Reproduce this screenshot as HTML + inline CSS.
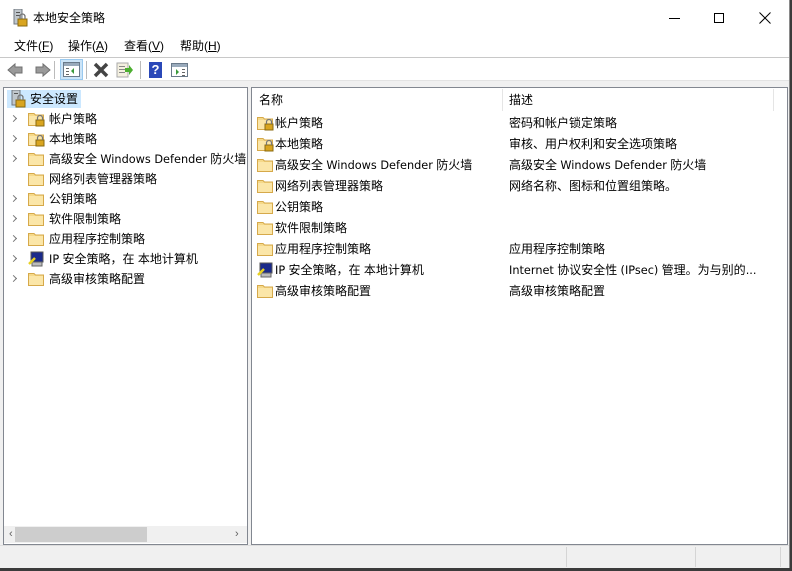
<!DOCTYPE html>
<html><head><meta charset="utf-8"><style>
*{margin:0;padding:0;box-sizing:border-box}
body{width:792px;height:571px;background:#3b3b3b;position:relative;overflow:hidden;font-family:"Liberation Sans","Noto Sans CJK SC",sans-serif;font-size:12px;color:#000}
.a{position:absolute}
#win{left:0;top:0;width:790px;height:568px;background:#fff;border:1px solid #8a8a8a;border-top:none;border-left:none}
.t{position:absolute;white-space:nowrap;line-height:16px}
.l{font-family:"DejaVu Sans","Noto Sans CJK SC",sans-serif;font-size:11.3px}
.chev{position:absolute;width:5px;height:5px;border-right:1.2px solid #777;border-bottom:1.2px solid #777;transform:rotate(-45deg)}
</style></head><body>
<div id="win" class="a">
<svg class="a" style="left:12px;top:9px" width="16" height="18"><rect x="2" y="0" width="8" height="15" fill="#bfc6cc" stroke="#707880"/><rect x="4" y="3" width="4" height="1" fill="#555"/><rect x="4" y="6" width="4" height="1" fill="#555"/><rect x="6" y="10" width="9" height="7" fill="#d9a520" stroke="#8a6a10"/><path d="M8 10V7.5a2.5 2.5 0 0 1 5 0V10" fill="none" stroke="#777" stroke-width="1.3"/></svg>
<div class="t" style="left:33px;top:10px;font-size:12px">本地安全策略</div>
<div class="a" style="left:669px;top:18px;width:11px;height:1px;background:#000"></div>
<div class="a" style="left:714px;top:13px;width:10px;height:10px;border:1px solid #000"></div>
<svg class="a" style="left:759px;top:12px" width="12" height="12"><path d="M0.5 0.5L11.5 11.5M11.5 0.5L0.5 11.5" stroke="#000" stroke-width="1"/></svg>
<div class="t" style="left:14px;top:38px">文件(<u>F</u>)</div>
<div class="t" style="left:68px;top:38px">操作(<u>A</u>)</div>
<div class="t" style="left:124px;top:38px">查看(<u>V</u>)</div>
<div class="t" style="left:180px;top:38px">帮助(<u>H</u>)</div>
<div class="a" style="left:0;top:57px;width:789px;height:1px;background:#c8c8c8"></div>
<svg class="a" style="left:7px;top:62px" width="44" height="16"><path d="M1 8L8 2V5H15V11H8V14Z" fill="#9a9a9a" stroke="#707070"/><path d="M43 8L36 2V5H29V11H36V14Z" fill="#9a9a9a" stroke="#707070"/></svg>
<div class="a" style="left:54px;top:61px;width:1px;height:18px;background:#bbb"></div>
<div class="a" style="left:60px;top:59px;width:23px;height:21px;background:#cce4f7;border:1px solid #99c9ef"></div>
<svg class="a" style="left:63px;top:62px" width="18" height="16"><rect x="0.5" y="0.5" width="16" height="14" fill="#fff" stroke="#6a7a8a"/><rect x="1" y="1" width="15" height="3" fill="#9ab"/><path d="M11 6L8 9L11 12Z" fill="#3a9a3a"/><rect x="3" y="6" width="3" height="1" fill="#666"/><rect x="3" y="9" width="3" height="1" fill="#666"/><rect x="3" y="12" width="3" height="1" fill="#666"/></svg>
<div class="a" style="left:86px;top:61px;width:1px;height:18px;background:#bbb"></div>
<svg class="a" style="left:93px;top:62px" width="16" height="16"><path d="M2 2L14 14M14 2L2 14" stroke="#444" stroke-width="3.5"/></svg>
<svg class="a" style="left:116px;top:62px" width="18" height="16"><rect x="1" y="1" width="11" height="14" fill="#f4f0e0" stroke="#aaa"/><rect x="3" y="4" width="6" height="1" fill="#888"/><rect x="3" y="7" width="6" height="1" fill="#888"/><rect x="3" y="10" width="6" height="1" fill="#888"/><path d="M9 6H13V3L17 8L13 13V10H9Z" fill="#4caf30"/></svg>
<div class="a" style="left:140px;top:61px;width:1px;height:18px;background:#bbb"></div>
<div class="a" style="left:149px;top:62px;width:13px;height:16px;background:#2a48b8;color:#fff;font-weight:bold;font-size:13px;text-align:center;line-height:16px">?</div>
<svg class="a" style="left:171px;top:63px" width="18" height="15"><rect x="0.5" y="0.5" width="16" height="13" fill="#fff" stroke="#6a7a8a"/><rect x="1" y="1" width="15" height="3" fill="#9ab"/><path d="M5 6L8 9L5 12Z" fill="#3a9a3a"/><rect x="11" y="6" width="3" height="1" fill="#666"/><rect x="11" y="9" width="3" height="1" fill="#666"/><rect x="11" y="12" width="3" height="1" fill="#666"/></svg>
<div class="a" style="left:0;top:80px;width:789px;height:7px;background:#f0f0f0;border-top:1px solid #e3e3e3"></div>
<div class="a" style="left:0;top:87px;width:789px;height:458px;background:#f0f0f0"></div>
<div class="a" style="left:3px;top:87px;width:245px;height:458px;background:#fff;border:1px solid #828790"></div>
<div class="a" style="left:7px;top:90px;width:74px;height:18px;background:#cce8ff"></div>
<svg class="a" style="left:10px;top:90px" width="16" height="18"><rect x="2" y="0" width="8" height="15" fill="#bfc6cc" stroke="#707880"/><rect x="4" y="3" width="4" height="1" fill="#555"/><rect x="6" y="10" width="9" height="7" fill="#d9a520" stroke="#8a6a10"/><path d="M8 10V7.5a2.5 2.5 0 0 1 5 0V10" fill="none" stroke="#777" stroke-width="1.3"/></svg>
<div class="t" style="left:30px;top:91px">安全设置</div>
<div class="a" style="left:251px;top:87px;width:537px;height:458px;background:#fff;border:1px solid #828790"></div>
<div class="t" style="left:259px;top:92px">名称</div>
<div class="a" style="left:502px;top:89px;width:1px;height:22px;background:#e5e5e5"></div>
<div class="t" style="left:509px;top:92px">描述</div>
<div class="a" style="left:773px;top:89px;width:1px;height:22px;background:#e5e5e5"></div>
<div class="a" style="left:4px;top:526px;width:243px;height:17px;background:#f0f0f0"></div>
<div class="a" style="left:15px;top:527px;width:132px;height:15px;background:#cdcdcd"></div>
<div class="t" style="left:9px;top:526px;color:#606060;font-size:11px">‹</div>
<div class="t" style="left:235px;top:526px;color:#606060;font-size:11px">›</div>
<div class="a" style="left:0;top:545px;width:789px;height:23px;background:#f0f0f0;border-top:1px solid #ddd"></div>
<div class="a" style="left:566px;top:547px;width:1px;height:20px;background:#d5d5d5"></div>
<div class="a" style="left:695px;top:547px;width:1px;height:20px;background:#d5d5d5"></div>
<div class="a" style="left:780px;top:547px;width:1px;height:20px;background:#d5d5d5"></div>
</div>
<div id="rows"></div>
<script>
function folder(x,y,lock){return '<svg class="a" style="left:'+x+'px;top:'+y+'px" width="17" height="16"><path d="M0.5 2.5H6L7.5 4H15.5V14.5H0.5Z" fill="#f5d98a" stroke="#d6a94a"/><rect x="1" y="5" width="14" height="9" fill="#fbe6a8"/>'+(lock?'<rect x="8" y="9" width="8" height="6" fill="#d9a520" stroke="#8a6a10"/><path d="M9.5 9V7a2.5 2.5 0 0 1 5 0V9" fill="none" stroke="#777" stroke-width="1.2"/>':'')+'</svg>';}
function ip(x,y){return '<svg class="a" style="left:'+x+'px;top:'+y+'px" width="17" height="16"><rect x="3" y="1" width="12" height="10" fill="#1a2a8a" stroke="#555"/><rect x="4" y="11" width="10" height="4" fill="#bbb" stroke="#666"/><path d="M1 13L7 7" stroke="#e8d020" stroke-width="2.5"/></svg>';}
function lat(s){return s.replace(/([A-Za-z()\.][A-Za-z()\. ]*[A-Za-z()\.]|[A-Za-z])/g,'<span class="l">$1</span>');}
var L=[["帐户策略",1,1],["本地策略",1,1],["高级安全 Windows Defender 防火墙",1,0],["网络列表管理器策略",0,0],["公钥策略",1,0],["软件限制策略",1,0],["应用程序控制策略",1,0],["IP 安全策略，在 本地计算机",1,2],["高级审核策略配置",1,0]];
var R=[["帐户策略","密码和帐户锁定策略",1],["本地策略","审核、用户权利和安全选项策略",1],["高级安全 Windows Defender 防火墙","高级安全 Windows Defender 防火墙",0],["网络列表管理器策略","网络名称、图标和位置组策略。",0],["公钥策略","",0],["软件限制策略","",0],["应用程序控制策略","应用程序控制策略",0],["IP 安全策略，在 本地计算机","Internet 协议安全性 (IPsec) 管理。为与别的...",2],["高级审核策略配置","高级审核策略配置",0]];
var h='';
L.forEach(function(r,i){var y=110+i*20;
 if(r[1])h+='<div class="chev" style="left:11px;top:'+(y+6)+'px"></div>';
 h+=r[2]==2?ip(28,y+1):folder(28,y+1,r[2]);
 h+='<div class="t" style="left:49px;top:'+(y+1)+'px;width:198px;overflow:hidden">'+lat(r[0])+'</div>';});
R.forEach(function(r,i){var y=115+i*21;
 h+=r[2]==2?ip(257,y):folder(257,y,r[2]);
 h+='<div class="t" style="left:275px;top:'+y+'px">'+lat(r[0])+'</div>';
 h+='<div class="t" style="left:509px;top:'+y+'px">'+lat(r[1])+'</div>';});
document.getElementById('rows').innerHTML=h;
</script>
</body></html>
